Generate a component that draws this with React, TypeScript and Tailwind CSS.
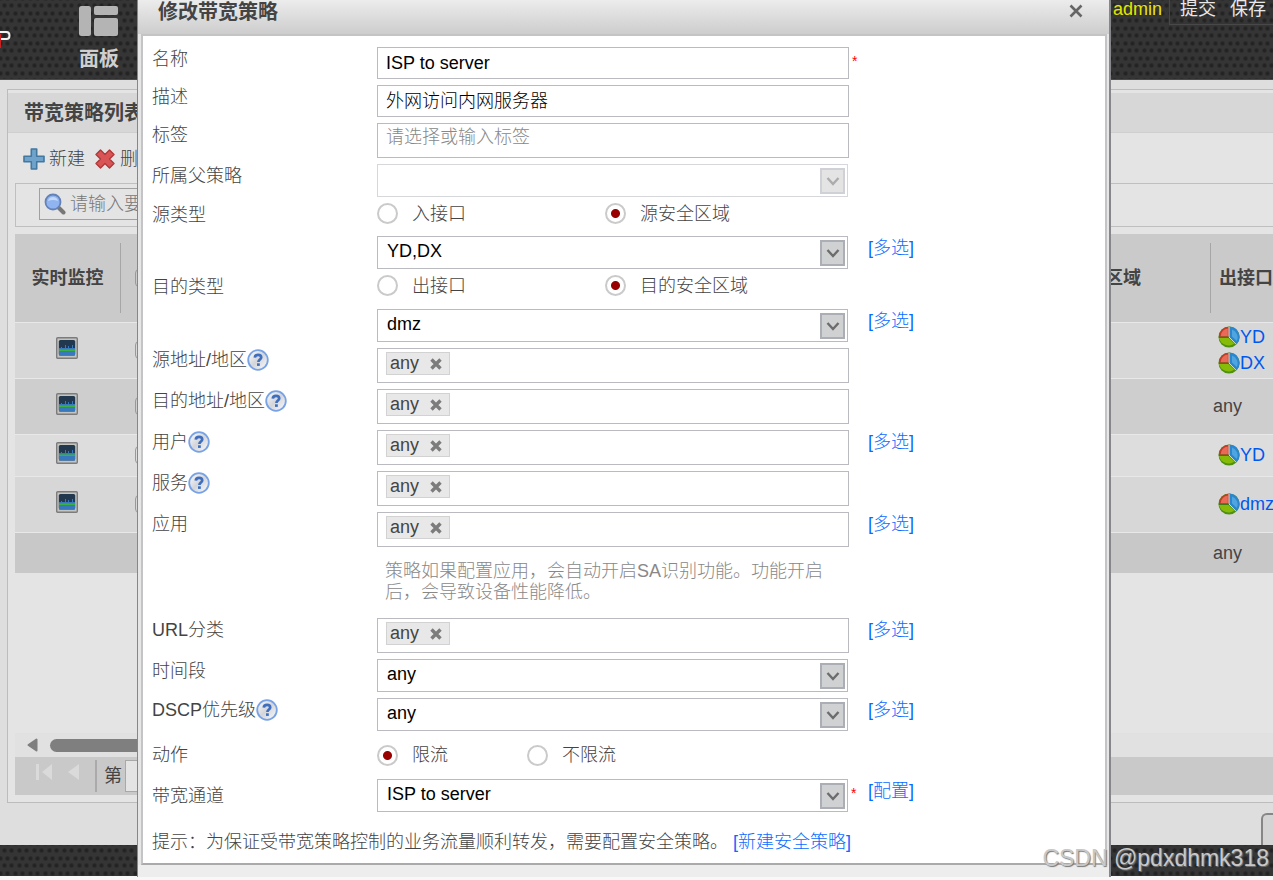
import React, { useState } from "react";

const tagRows = [
  { id: "src-addr", label: "源地址/地区", help: true, link: false },
  { id: "dst-addr", label: "目的地址/地区", help: true, link: false },
  { id: "user", label: "用户", help: true, link: true },
  { id: "service", label: "服务", help: true, link: false },
  { id: "app", label: "应用", help: false, link: true },
];

const policies = [
  { out: ["YD", "DX"], zone: true, className: "h-[56px] bg-[#d7d7d7]" },
  { out: ["any"], zone: false, className: "h-[56px] bg-[#cecece]" },
  { out: ["YD"], zone: true, className: "h-[42px] bg-[#dddddd]" },
  { out: ["dmz"], zone: true, className: "h-[56px] bg-[#d7d7d7]" },
  { out: ["any"], zone: false, className: "h-[41px] bg-[#c8c8c8]" },
];

const dots =
  "bg-[#353536] bg-[radial-gradient(circle,#232323_1px,transparent_3px),radial-gradient(circle,#232323_1px,transparent_3px),radial-gradient(circle,#232323_1px,transparent_3px),radial-gradient(circle,#232323_1px,transparent_3px)] bg-[size:15px_15px] bg-[position:0_6px,8px_6px,4px_13px,12px_13px]";

function HelpIcon() {
  return (
    <svg viewBox="0 0 22 22" className="size-[22px] shrink-0" aria-label="帮助">
      <defs>
        <linearGradient id="helpFill" x1="0" y1="0" x2="1" y2="1">
          <stop offset="0" stopColor="#ffffff" />
          <stop offset="0.5" stopColor="#d3d5da" />
          <stop offset="1" stopColor="#ffffff" />
        </linearGradient>
      </defs>
      <circle cx="11" cy="11" r="9.8" fill="url(#helpFill)" stroke="#78a2e6" strokeWidth="1.8" />
      <path
        d="M7.8 8.6C7.9 6.8 9.1 5.8 11 5.8c1.900 0 3.200 1 3.200 2.600C14.200 10.500 11.400 10.500 11.400 13"
        fill="none"
        stroke="#3e6ebd"
        strokeWidth="2.700"
      />
      <rect x="10" y="14.300" width="2.800" height="2.600" fill="#3e6ebd" />
    </svg>
  );
}

function CrossIcon({ className }: { className: string }) {
  return (
    <svg viewBox="0 0 12 12" className={className}>
      <path d="M1.500 1.500l9 9M10.500 1.500l-9 9" stroke="currentColor" strokeWidth="3.400" />
    </svg>
  );
}

function PieIcon() {
  return (
    <svg viewBox="0 0 22 22" className="size-[22px] shrink-0">
      <circle cx="11" cy="11" r="10.500" fill="#4f8f12" />
      <path d="M11 11V.8A10.200 10.200 0 0 0 .8 11z" fill="#c23a28" />
      <path d="M9.800 10.200V2.600A8 8 0 0 0 2.600 10.200z" fill="#ea6a59" />
      <path d="M11 11V.5a10.500 10.500 0 0 1 7.800 17.600z" fill="#2c86cc" />
      <path d="M14 3.500a8.500 8.500 0 0 1 4.800 11.500l-4.800-4.600z" fill="#4fa5df" />
      <path d="M1 12h9.600l5.600 5.800A10 10 0 0 1 1 12z" fill="#86bb08" />
      <path d="M11 .8V11l7.200 7.400" fill="none" stroke="#e4ecdf" strokeWidth=".9" />
      <path d="M.8 11.300H11" stroke="#3f7a16" strokeWidth="1.300" />
    </svg>
  );
}

function MonitorIcon() {
  return (
    <svg viewBox="0 0 22 22" className="size-[22px]">
      <rect x=".7" y=".7" width="20.600" height="20.600" rx="1" fill="#c4c4c0" stroke="#7c7c7c" strokeWidth="1.400" />
      <rect x="2.800" y="3" width="16.400" height="15.500" rx="1.500" fill="#22384f" />
      <path d="M3 11h2v-1h1v1h3V8h1v3h2V9h1v2h3V8h1v3h2v7.500H3z" fill="#3878bd" />
      <path d="M3 13.200h16" stroke="#3bb53b" strokeWidth="1.500" />
    </svg>
  );
}

function FormRow({
  label,
  htmlFor,
  help,
  extra,
  className = "items-start",
  children,
}: {
  label?: string;
  htmlFor?: string;
  help?: boolean;
  extra?: React.ReactNode;
  className?: string;
  children: React.ReactNode;
}) {
  return (
    <div className={`flex ${className}`}>
      <div className="flex w-[225px] shrink-0 items-center leading-6">
        {label && <label htmlFor={htmlFor}>{label}</label>}
        {help && <HelpIcon />}
      </div>
      <div className="w-[472px] shrink-0">{children}</div>
      {extra}
    </div>
  );
}

function FormLink({ text = "[多选]" }: { text?: string }) {
  return (
    <a href="#" className="ml-[19px] self-start leading-6 text-[#0a6cff]">
      {text}
    </a>
  );
}

function Dropdown({ id, value, disabled }: { id: string; value: string; disabled?: boolean }) {
  return (
    <div className="relative w-[471px]">
      <select
        id={id}
        disabled={disabled}
        className="block h-[33px] w-full appearance-none border border-[#b9bbc1] bg-white pr-8 pb-1 pl-[9px] text-black disabled:border-[#d6d7da]"
      >
        <option>{value}</option>
      </select>
      <span
        className={`pointer-events-none absolute top-1 right-[3px] flex h-[26px] w-[25px] items-center justify-center border-2 ${
          disabled ? "border-[#cfd1d6] bg-[#e4e4e5] text-[#acacac]" : "border-[#acaeb5] bg-[#d0d1d3] text-[#6c6c6c]"
        }`}
      >
        <svg viewBox="0 0 14 10" className="h-[10px] w-[14px]">
          <path d="M1.500 2L7 8l5.500-6" fill="none" stroke="currentColor" strokeWidth="2.400" />
        </svg>
      </span>
    </div>
  );
}

function TagBox({ id }: { id: string }) {
  return (
    <div className="flex h-[35px] border border-[#b9bbc1] bg-white pt-[3px] pl-2">
      <span className="flex h-[23px] w-16 shrink-0 items-center border border-[#d2d2d2] bg-[#e8e8e8] pb-[2px] pl-[3px] text-[#444]">
        any
        <button aria-label="移除 any" className="mt-[2px] ml-[11px] text-[#7c7c7c]">
          <CrossIcon className="size-3" />
        </button>
      </span>
      <input id={id} className="h-[23px] min-w-0 flex-1 outline-none" />
    </div>
  );
}

function RadioPair({
  name,
  options,
  initial,
  width,
}: {
  name: string;
  options: string[];
  initial: string;
  width: string;
}) {
  const [value, setValue] = useState(initial);

  return (
    <div className="flex h-[21px] items-center">
      {options.map((option) => (
        <label key={option} className={`flex items-center gap-[14px] ${width}`}>
          <input
            type="radio"
            name={name}
            checked={value === option}
            onChange={() => setValue(option)}
            className="size-[21px] shrink-0 appearance-none rounded-full border-2 border-[#cacaca] bg-white checked:bg-[radial-gradient(circle,#990000_4px,transparent_5px)]"
          />
          {option}
        </label>
      ))}
    </div>
  );
}

function PolicyDialog() {
  return (
    <div
      role="dialog"
      aria-labelledby="dialog-title"
      className="border-r-2 border-l border-[#85878a] bg-[#e6e6e6] text-[#444]"
    >
      <div className="flex h-[34px] items-start justify-between bg-linear-to-b from-[#ececec] to-[#cdcdcd] pr-[26px] pl-5">
        <h2 id="dialog-title" className="text-[20px] leading-6 font-bold text-[#444]">
          修改带宽策略
        </h2>
        <button aria-label="关闭" className="mt-1 text-[#666]">
          <svg viewBox="0 0 14 14" className="size-[14px]">
            <path d="M1.500 1.500l11 11M12.500 1.500l-11 11" stroke="currentColor" strokeWidth="2.600" />
          </svg>
        </button>
      </div>

      <div className="mr-[2px] ml-[3px] flex flex-col gap-1.5 border-2 border-[#c4c4c6] border-b-[#aaa] bg-white pt-[11px] pb-[9px] pl-[9px] font-light">
        <FormRow
          label="名称"
          htmlFor="name"
          extra={<span className="ml-[3px] text-[14px] leading-7 text-[#f00]">*</span>}
        >
          <input
            id="name"
            defaultValue="ISP to server"
            className="block h-8 w-full border border-[#b9bbc1] px-2 text-black"
          />
        </FormRow>
        <FormRow label="描述" htmlFor="desc">
          <input
            id="desc"
            defaultValue="外网访问内网服务器"
            className="block h-8 w-full border border-[#b9bbc1] px-2 pb-1 text-black"
          />
        </FormRow>
        <FormRow label="标签" htmlFor="tag">
          <input
            id="tag"
            placeholder="请选择或输入标签"
            className="block h-[35px] w-full border border-[#b9bbc1] px-2 pb-1.5 placeholder:text-[#888]"
          />
        </FormRow>
        <FormRow label="所属父策略" htmlFor="parent">
          <Dropdown id="parent" value="" disabled />
        </FormRow>

        <FormRow label="源类型" className="h-[27px] items-start">
          <RadioPair name="src-type" options={["入接口", "源安全区域"]} initial="源安全区域" width="w-[228px]" />
        </FormRow>
        <FormRow extra={<FormLink />}>
          <Dropdown id="src-zone" value="YD,DX" />
        </FormRow>
        <FormRow label="目的类型" className="h-7 items-start">
          <RadioPair name="dst-type" options={["出接口", "目的安全区域"]} initial="目的安全区域" width="w-[228px]" />
        </FormRow>
        <FormRow extra={<FormLink />}>
          <Dropdown id="dst-zone" value="dmz" />
        </FormRow>

        {tagRows.map((row) => (
          <FormRow
            key={row.id}
            label={row.label}
            htmlFor={row.id}
            help={row.help}
            extra={row.link ? <FormLink /> : null}
          >
            <TagBox id={row.id} />
          </FormRow>
        ))}
        <FormRow>
          <p className="h-[59px] pt-2 pr-5 pl-2 leading-[21px] text-[#888]">
            策略如果配置应用，会自动开启SA识别功能。功能开启后，会导致设备性能降低。
          </p>
        </FormRow>
        <FormRow label="URL分类" htmlFor="url" extra={<FormLink />}>
          <TagBox id="url" />
        </FormRow>
        <FormRow label="时间段" htmlFor="time">
          <Dropdown id="time" value="any" />
        </FormRow>
        <FormRow label="DSCP优先级" htmlFor="dscp" help extra={<FormLink />}>
          <Dropdown id="dscp" value="any" />
        </FormRow>

        <FormRow label="动作" className="h-9 items-center">
          <RadioPair name="action" options={["限流", "不限流"]} initial="限流" width="w-[150px]" />
        </FormRow>
        <FormRow
          label="带宽通道"
          htmlFor="channel"
          className="items-center"
          extra={
            <>
              <span className="ml-[2px] w-0 self-start text-[14px] leading-7 text-[#f00]">*</span>
              <a href="#" className="ml-[17px] self-start leading-6 text-[#0a6cff]">
                [配置]
              </a>
            </>
          }
        >
          <Dropdown id="channel" value="ISP to server" />
        </FormRow>
        <p className="pt-3 leading-6">
          提示：为保证受带宽策略控制的业务流量顺利转发，需要配置安全策略。{" "}
          <a href="#" className="text-[#0a6cff]">
            [新建安全策略]
          </a>
        </p>
      </div>
      <div className="h-3 bg-[#ededed]" />
    </div>
  );
}

function TopBar() {
  return (
    <header className={`flex h-20 shrink-0 justify-between border-b border-[#6b3a3c] ${dots}`}>
      <div className="flex">
        <svg viewBox="0 0 12 20" className="mt-[29px] h-5 w-3">
          <path d="M0 3h6.500q3 0 3 3.500t-3 3.500H0" fill="none" stroke="#f2f2f2" strokeWidth="2" />
          <path d="M0 5v14" stroke="#c22" strokeWidth="2" />
        </svg>
        <a href="#" className="ml-[67px] flex flex-col items-center pt-[6px] text-[20px] font-bold text-[#cfcfcf]">
          <svg viewBox="0 0 40 31" className="h-[31px] w-10">
            <g fill="#b4b4b4">
              <rect x="0" y="0" width="12" height="30" rx="2.500" />
              <rect x="15" y="0" width="24" height="9" rx="2" />
              <rect x="15" y="12" width="24" height="18" rx="2" />
            </g>
          </svg>
          <span className="pt-2 leading-7">面板</span>
        </a>
      </div>
      <nav className="flex h-[25px] leading-[18px] text-[#e8e8e8]">
        <span className="pr-[7px] text-[#e5e500]">admin</span>
        <div className="flex gap-[14px] border-b border-l border-[#484848] pr-[7px] pl-[10px]">
          <a href="#">提交</a>
          <a href="#">保存</a>
        </div>
      </nav>
    </header>
  );
}

function PolicyTable() {
  return (
    <table className="w-full table-fixed border-collapse text-[#444]">
      <colgroup>
        <col className="w-[106px]" />
        <col />
        <col className="w-[200px]" />
        <col className="w-[62px]" />
      </colgroup>
      <thead>
        <tr className="h-[88px] bg-[#cacaca] font-bold">
          <th className="p-0">
            <div className="flex h-[70px] items-center justify-center border-r border-[#a6a6a6]">实时监控</div>
          </th>
          <th className="p-0 pl-[14px] text-left">
            <input type="checkbox" aria-label="全选" className="block size-[18px] appearance-none rounded-sm border border-[#999]" />
          </th>
          <th className="p-0">
            <div className="flex h-[70px] items-center justify-end border-r border-[#a6a6a6] pr-[69px] whitespace-nowrap">
              源安全区域
            </div>
          </th>
          <th className="p-0 pl-2 text-left whitespace-nowrap">出接口/目的安全区域</th>
        </tr>
      </thead>
      <tbody>
        {policies.map((policy, index) => (
          <tr key={index} className={`border-t border-[#e8e8e8] ${policy.className}`}>
            <td className="p-0 pb-1 pl-[41px]">{index < 4 && <MonitorIcon />}</td>
            <td className="p-0 pl-[14px]">
              {index < 4 && (
                <input
                  type="checkbox"
                  aria-label={`选择策略 ${index + 1}`}
                  className="block size-[18px] appearance-none rounded-sm border border-[#999]"
                />
              )}
            </td>
            <td />
            <td className="p-0 leading-[26px]">
              {policy.out.map((name) =>
                policy.zone ? (
                  <a key={name} href="#" className="flex items-center pl-[7px] text-[#0057f0]">
                    <PieIcon />
                    {name}
                  </a>
                ) : (
                  <span key={name} className="pl-[2px]">
                    {name}
                  </span>
                )
              )}
            </td>
          </tr>
        ))}
      </tbody>
    </table>
  );
}

function App() {
  return (
    <div
      lang="zh-CN"
      className="relative flex min-h-screen flex-col overflow-hidden bg-[#f8f8f8] font-['Liberation_Sans','Noto_Sans_CJK_SC',sans-serif] text-[18px] leading-6"
    >
      <TopBar />
      <main className="flex flex-1 flex-col bg-[#dedede] pt-[9px] pl-[7px]">
        <section className="flex flex-1 flex-col border-y border-l border-[#bcbcbc] bg-[#e4e4e4] pt-[3px]">
          <h1 className="h-10 border-b border-[#cfcfcf] bg-[#d7d7d7] pl-4 text-[20px] leading-10 font-bold text-[#444]">
            带宽策略列表
          </h1>
          <div className="flex flex-1 flex-col pb-[7px] pl-[7px]">
            <div className="flex h-[50px] items-center gap-[10px] pt-[2px] pl-2 font-light text-[#444]">
              <button className="flex items-center gap-1">
                <svg viewBox="0 0 22 22" className="size-[22px]">
                  <path
                    d="M8.300 1h5.400v7.300H21v5.400h-7.300V21H8.300v-7.300H1V8.300h7.300z"
                    fill="#6fa3cc"
                    stroke="#42779f"
                    strokeWidth="1.600"
                    strokeLinejoin="round"
                  />
                </svg>
                新建
              </button>
              <button className="flex items-center gap-[5px]">
                <svg viewBox="0 0 20 20" className="size-5">
                  <path
                    d="M5.500 1L10 5.500 14.500 1 19 5.500 14.500 10l4.500 4.500-4.500 4.500-4.500-4.500L5.500 19 1 14.500 5.500 10 1 5.500z"
                    fill="#d95555"
                    stroke="#b03737"
                    strokeWidth="1.400"
                    strokeLinejoin="round"
                  />
                </svg>
                删除
              </button>
            </div>
            <div className="mb-[7px] flex h-11 items-center border-y border-l border-[#bfbfbf] pb-[2px] pl-[23px]">
              <label className="flex h-8 w-64 items-center gap-1 border border-[#a0a0a0] bg-[#e4e4e4] pl-1 font-light">
                <svg viewBox="0 0 22 22" className="size-[22px] shrink-0">
                  <path d="M14.500 14.500l5 5" stroke="#777" strokeWidth="4" strokeLinecap="round" />
                  <circle cx="9" cy="9" r="7.500" fill="#8fb4f0" stroke="#6482b8" strokeWidth="1.800" />
                  <path d="M4 8q1-4 5-4t5 4q-5-2-10 0z" fill="#c4d8fa" />
                </svg>
                <input
                  aria-label="查询"
                  placeholder="请输入要查询的内容"
                  className="min-w-0 flex-1 outline-none placeholder:text-[#777]"
                />
              </label>
            </div>

            <div className="flex-1">
              <PolicyTable />
            </div>

            <div className="flex h-6 items-center gap-3 bg-[#e1e1e1] pl-3">
              <svg viewBox="0 0 11 14" className="h-[14px] w-[11px]">
                <path d="M9.500 1.500v11L1.500 7z" fill="#7f7f7f" stroke="#7f7f7f" strokeWidth="2" strokeLinejoin="round" />
              </svg>
              <div className="h-[13px] w-2/3 rounded-full bg-[#7f7f7f]" />
            </div>
            <div className="flex h-[38px] items-center bg-[#c9c9c9] pl-5 text-[#444]">
              <button aria-label="首页" className="pb-2">
                <svg viewBox="0 0 18 18" className="size-[18px]">
                  <path d="M2.500 1v16" stroke="#dadada" strokeWidth="3" />
                  <path d="M17 1v16L7 9z" fill="#dadada" />
                </svg>
              </button>
              <button aria-label="上一页" className="ml-3 pb-2">
                <svg viewBox="0 0 18 18" className="size-[18px]">
                  <path d="M14 1v16L3 9z" fill="#dadada" />
                </svg>
              </button>
              <label className="ml-3 flex items-center gap-[3px] border-l-2 border-[#aaa] pl-[7px] leading-5">
                第
                <input defaultValue="" className="h-8 w-12 border border-[#a8a8a8] bg-[#e4e4e4]" />
              </label>
            </div>
          </div>
        </section>
        <div className="flex h-[42px] items-end justify-end">
          <button
            aria-label="应用"
            className="h-8 w-3 rounded-tl-md border-t-2 border-l-2 border-[#868686] bg-[#d4d4d4]"
          />
        </div>
      </main>
      <footer className={`mb-1 h-[31px] shrink-0 ${dots}`} />

      <div className="absolute inset-x-0 top-0 pr-[162px] pl-[137px]">
        <PolicyDialog />
      </div>
      <div className="absolute right-1 bottom-1 text-[23px] leading-9 text-[#c8c8c8] [text-shadow:1px_1px_1px_#777]">
        CSDN @pdxdhmk318
      </div>
    </div>
  );
}

export default App;
